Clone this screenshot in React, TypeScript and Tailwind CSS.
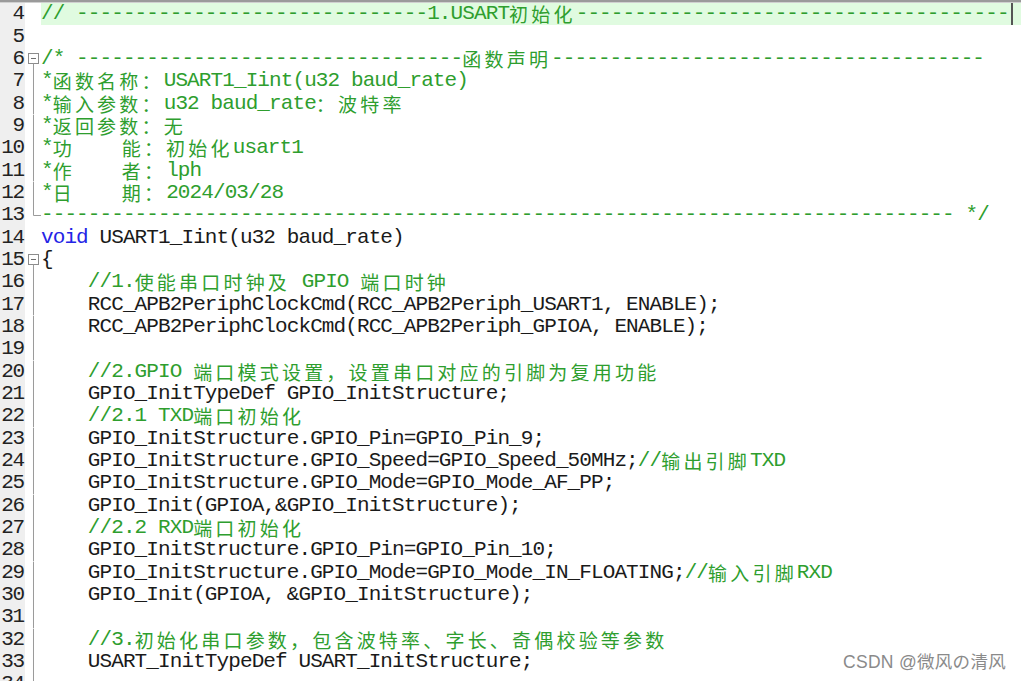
import React from 'react';

type Tok = [string, 'c' | 'k' | 'n'];

const dash = (n: number) => '-'.repeat(n);

const LINES: { n: number; toks: Tok[]; fold?: 'open' | 'line' | 'end' }[] = [
  { n: 4, toks: [['// ' + dash(30) + '1.USART初始化' + dash(37), 'c']] },
  { n: 5, toks: [] },
  { n: 6, fold: 'open', toks: [['/* ' + dash(33) + '函数声明' + dash(37), 'c']] },
  { n: 7, fold: 'line', toks: [['*函数名称：USART1_Iint(u32 baud_rate)', 'c']] },
  { n: 8, fold: 'line', toks: [['*输入参数：u32 baud_rate：波特率', 'c']] },
  { n: 9, fold: 'line', toks: [['*返回参数：无', 'c']] },
  { n: 10, fold: 'line', toks: [['*功    能：初始化usart1', 'c']] },
  { n: 11, fold: 'line', toks: [['*作    者：lph', 'c']] },
  { n: 12, fold: 'line', toks: [['*日    期：2024/03/28', 'c']] },
  { n: 13, fold: 'end', toks: [[dash(78) + ' */', 'c']] },
  { n: 14, toks: [['void', 'k'], [' USART1_Iint(u32 baud_rate)', 'n']] },
  { n: 15, fold: 'open', toks: [['{', 'n']] },
  { n: 16, fold: 'line', toks: [['    ', 'n'], ['//1.使能串口时钟及 GPIO 端口时钟', 'c']] },
  { n: 17, fold: 'line', toks: [['    RCC_APB2PeriphClockCmd(RCC_APB2Periph_USART1, ENABLE);', 'n']] },
  { n: 18, fold: 'line', toks: [['    RCC_APB2PeriphClockCmd(RCC_APB2Periph_GPIOA, ENABLE);', 'n']] },
  { n: 19, fold: 'line', toks: [] },
  { n: 20, fold: 'line', toks: [['    ', 'n'], ['//2.GPIO 端口模式设置，设置串口对应的引脚为复用功能', 'c']] },
  { n: 21, fold: 'line', toks: [['    GPIO_InitTypeDef GPIO_InitStructure;', 'n']] },
  { n: 22, fold: 'line', toks: [['    ', 'n'], ['//2.1 TXD端口初始化', 'c']] },
  { n: 23, fold: 'line', toks: [['    GPIO_InitStructure.GPIO_Pin=GPIO_Pin_9;', 'n']] },
  { n: 24, fold: 'line', toks: [['    GPIO_InitStructure.GPIO_Speed=GPIO_Speed_50MHz;', 'n'], ['//输出引脚TXD', 'c']] },
  { n: 25, fold: 'line', toks: [['    GPIO_InitStructure.GPIO_Mode=GPIO_Mode_AF_PP;', 'n']] },
  { n: 26, fold: 'line', toks: [['    GPIO_Init(GPIOA,&GPIO_InitStructure);', 'n']] },
  { n: 27, fold: 'line', toks: [['    ', 'n'], ['//2.2 RXD端口初始化', 'c']] },
  { n: 28, fold: 'line', toks: [['    GPIO_InitStructure.GPIO_Pin=GPIO_Pin_10;', 'n']] },
  { n: 29, fold: 'line', toks: [['    GPIO_InitStructure.GPIO_Mode=GPIO_Mode_IN_FLOATING;', 'n'], ['//输入引脚RXD', 'c']] },
  { n: 30, fold: 'line', toks: [['    GPIO_Init(GPIOA, &GPIO_InitStructure);', 'n']] },
  { n: 31, fold: 'line', toks: [] },
  { n: 32, fold: 'line', toks: [['    ', 'n'], ['//3.初始化串口参数，包含波特率、字长、奇偶校验等参数', 'c']] },
  { n: 33, fold: 'line', toks: [['    USART_InitTypeDef USART_InitStructure;', 'n']] },
  { n: 34, fold: 'line', toks: [] },
];

const COLORS = {
  c: 'text-[#2e9e2e]',
  k: 'text-[#2424e6]',
  n: 'text-[#1a1a1a]',
};

// split text into runs of wide (CJK / full-width) and narrow chars
function splitRuns(text: string) {
  const runs: { s: string; wide: boolean }[] = [];
  for (const ch of text) {
    const wide = /[\u3000-\u9fff\uff00-\uffef]/.test(ch);
    const last = runs[runs.length - 1];
    if (last && last.wide === wide) last.s += ch;
    else runs.push({ s: ch, wide });
  }
  return runs;
}

function Fold({ kind }: { kind?: 'open' | 'line' | 'end' }) {
  if (!kind) return null;
  return (
    <svg width="16" height="22.35" viewBox="0 0 16 22.35" className="block">
      {kind === 'open' && (
        <>
          <rect x="3.5" y="5.5" width="10" height="10" fill="#fff" stroke="#8c8c8c" />
          <line x1="6" y1="10.5" x2="11" y2="10.5" stroke="#6c6c6c" />
          <line x1="8.5" y1="15.5" x2="8.5" y2="22.35" stroke="#9a9a9a" />
        </>
      )}
      {kind === 'line' && <line x1="8.5" y1="0" x2="8.5" y2="22.35" stroke="#9a9a9a" />}
      {kind === 'end' && (
        <>
          <line x1="8.5" y1="0" x2="8.5" y2="11.5" stroke="#9a9a9a" />
          <line x1="8.5" y1="11.5" x2="16" y2="11.5" stroke="#9a9a9a" />
        </>
      )}
    </svg>
  );
}

function CodeLine({ toks }: { toks: Tok[] }) {
  return (
    <>
      {toks.map(([text, kind], i) =>
        splitRuns(text).map((r, j) => (
          <span
            key={`${i}-${j}`}
            className={
              r.wide
                ? `inline-block h-[22px] leading-[22px] overflow-visible font-['Noto_Sans_CJK_SC',sans-serif] text-[19px] tracking-[3.2px] ${COLORS[kind]}`
                : `inline-block h-[22px] leading-[22px] overflow-visible font-['Liberation_Mono',monospace] text-[21px] tracking-[-0.9px] ${COLORS[kind]}`
            }
          >
            {r.s}
          </span>
        ))
      )}
    </>
  );
}

export default function App() {
  return (
    <div className="relative w-[1021px] h-[681px] overflow-hidden bg-white">
      <div className="h-[3px] bg-[#9a9a9a] border-b border-[#d0d0d0]" />
      <div className="flex flex-col">
        {LINES.map((line) => (
          <div key={line.n} className="flex h-[22.35px] shrink-0">
            <div className="w-[25px] shrink-0 bg-[#efefef] flex items-center justify-end pr-[1px] font-['Liberation_Mono',monospace] text-[21px] tracking-[-1.2px] text-[#222] leading-[22px]">
              {line.n}
            </div>
            <div className="w-[16px] shrink-0">
              <Fold kind={line.fold} />
            </div>
            <div
              className={`flex-1 flex items-center whitespace-pre leading-[22px] ${
                line.n === 4 ? 'bg-[#e0fbe0]' : ''
              }`}
            >
              <CodeLine toks={line.toks} />
              {line.n === 4 && <div className="ml-auto mr-[8px] w-[2px] h-full bg-[#555]" />}
            </div>
          </div>
        ))}
      </div>
      {/* watermark */}
      <div className="absolute right-[15px] bottom-[6px] font-['Liberation_Sans','Noto_Sans_CJK_SC',sans-serif] text-[17.5px] text-[#8a8a8a] tracking-[0.3px]">
        CSDN @微风の清风
      </div>
    </div>
  );
}
